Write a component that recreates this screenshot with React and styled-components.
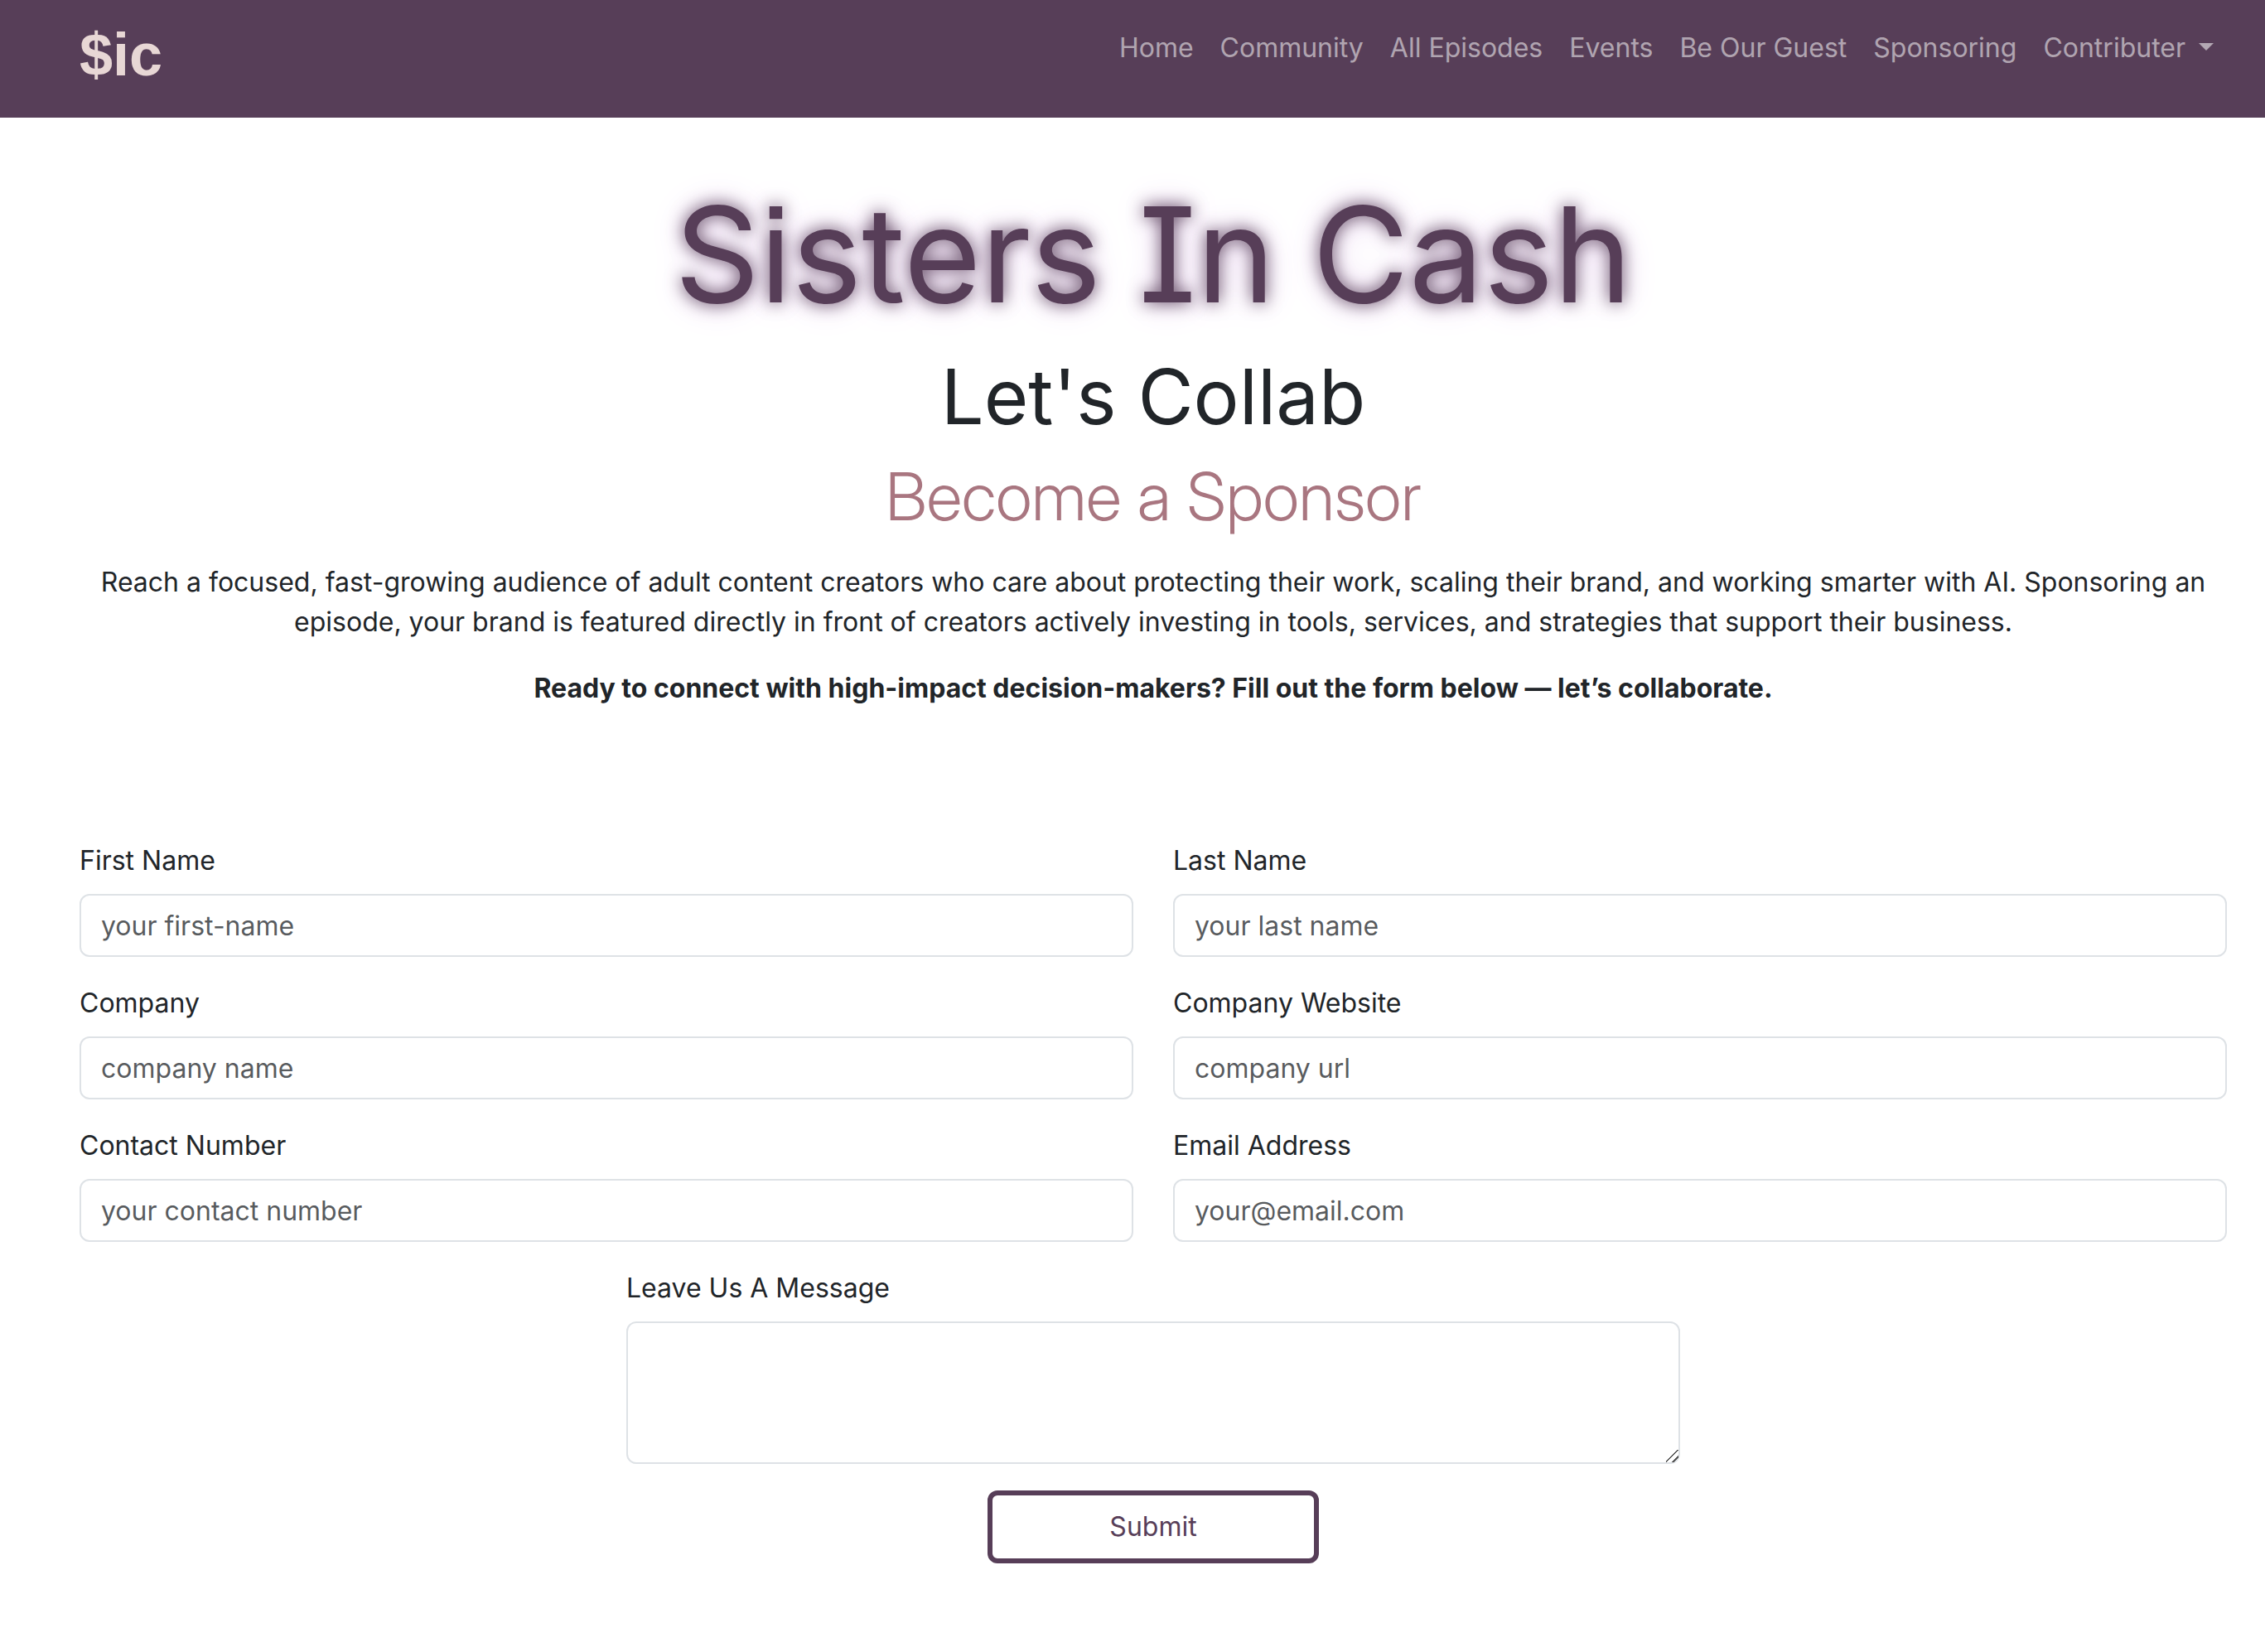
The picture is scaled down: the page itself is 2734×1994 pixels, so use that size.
import React from "react";
import styled, { createGlobalStyle } from "styled-components";

const plum = "#573e58";

const GlobalStyle = createGlobalStyle`
  *, *::before, *::after { box-sizing: border-box; }
  body {
    margin: 0;
    background: #fff;
    color: #212529;
    font-family: Inter, "Liberation Sans", sans-serif;
    font-size: 32px;
    line-height: 48px;
  }
`;

const Navbar = styled.nav`
  display: flex;
  justify-content: space-between;
  align-items: flex-start;
  min-height: 142px;
  padding: 18px 46px 16px 96px;
  background: ${plum};
`;

const Brand = styled.a`
  color: #e8d7d5;
  font-family: "Liberation Sans", Arial, sans-serif;
  font-size: 72px;
  font-weight: 700;
  line-height: 96px;
  text-decoration: none;
`;

const NavList = styled.ul`
  display: flex;
  margin: 0;
  padding: 0;
  list-style: none;
`;

const NavLink = styled.a`
  display: block;
  padding: 16px;
  color: rgba(255, 255, 255, 0.55);
  text-decoration: none;
  white-space: nowrap;
`;

const Caret = styled.span`
  display: inline-block;
  margin-left: 16px;
  vertical-align: 8px;
  border-top: 9px solid;
  border-right: 9px solid transparent;
  border-left: 9px solid transparent;
`;

const Main = styled.main`
  padding: 73px 46px 96px 96px;
`;

const Intro = styled.header`
  padding-bottom: 128px;
  text-align: center;
`;

const Title = styled.h1`
  margin: 0 0 24px;
  color: ${plum};
  font-size: 160px;
  font-weight: 400;
  line-height: 184px;
  font-feature-settings: "cv08", "ss07";
  text-shadow: 0 0 20px ${plum}, 0 0 40px #e4c8ee;
`;

const Subtitle = styled.h2`
  margin: 0 0 16px;
  font-size: 92px;
  font-weight: 400;
  line-height: 112px;
`;

const Tagline = styled.h3`
  margin: 0 0 32px;
  color: #a97680;
  font-family: "Inter Display", Inter, sans-serif;
  font-size: 80px;
  font-weight: 300;
  line-height: 96px;
`;

const Paragraph = styled.p`
  margin: 0 0 32px;
  font-weight: ${(p) => (p.$strong ? 700 : 400)};
`;

const Form = styled.form`
  display: grid;
  grid-template-columns: repeat(4, minmax(0, 1fr));
  gap: 32px 48px;
`;

const Field = styled.div`
  display: flex;
  flex-direction: column;
  gap: 16px;
  grid-column: ${(p) => (p.$centered ? "2 / span 2" : "span 2")};
`;

const Input = styled.input`
  width: 100%;
  height: 76px;
  padding: 12px 24px;
  border: 2px solid #dee2e6;
  border-radius: 12px;
  background: #fff;
  color: inherit;
  font: inherit;
  &::placeholder { color: rgba(33, 37, 41, 0.75); opacity: 1; }
`;

const TextArea = styled(Input).attrs({ as: "textarea" })`
  display: block;
  height: 172px;
  resize: vertical;
  &::-webkit-resizer {
    background: linear-gradient(
      135deg,
      transparent 46%,
      #555 46%,
      #555 53%,
      transparent 53%,
      transparent 73%,
      #555 73%,
      #555 80%,
      transparent 80%
    );
  }
`;

const SubmitButton = styled.button`
  grid-column: 1 / -1;
  justify-self: center;
  width: 400px;
  padding: 14px 24px;
  border: 6px solid ${plum};
  border-radius: 12px;
  background: transparent;
  color: ${plum};
  font: inherit;
`;

const links = ["Home", "Community", "All Episodes", "Events", "Be Our Guest", "Sponsoring"];

const fields = [
  { id: "first-name", label: "First Name", placeholder: "your first-name", type: "text" },
  { id: "last-name", label: "Last Name", placeholder: "your last name", type: "text" },
  { id: "company", label: "Company", placeholder: "company name", type: "text" },
  { id: "website", label: "Company Website", placeholder: "company url", type: "url" },
  { id: "phone", label: "Contact Number", placeholder: "your contact number", type: "tel" },
  { id: "email", label: "Email Address", placeholder: "your@email.com", type: "email" },
];

export default function App() {
  return (
    <>
      <GlobalStyle />
      <Navbar>
        <Brand href="#">$ic</Brand>
        <NavList>
          {links.map((name) => (
            <li key={name}>
              <NavLink href="#">{name}</NavLink>
            </li>
          ))}
          <li>
            <NavLink href="#">
              Contributer
              <Caret />
            </NavLink>
          </li>
        </NavList>
      </Navbar>
      <Main>
        <Intro>
          <Title>Sisters In Cash</Title>
          <Subtitle>Let's Collab</Subtitle>
          <Tagline>Become a Sponsor</Tagline>
          <Paragraph>
            Reach a focused, fast-growing audience of adult content creators who care about
            protecting their work, scaling their brand, and working smarter with AI. Sponsoring an
            episode, your brand is featured directly in front of creators actively investing in
            tools, services, and strategies that support their business.
          </Paragraph>
          <Paragraph $strong>
            Ready to connect with high-impact decision-makers? Fill out the form below — let’s
            collaborate.
          </Paragraph>
        </Intro>
        <Form onSubmit={(e) => e.preventDefault()}>
          {fields.map((f) => (
            <Field key={f.id}>
              <label htmlFor={f.id}>{f.label}</label>
              <Input id={f.id} type={f.type} placeholder={f.placeholder} />
            </Field>
          ))}
          <Field $centered>
            <label htmlFor="message">Leave Us A Message</label>
            <TextArea id="message" />
          </Field>
          <SubmitButton type="submit">Submit</SubmitButton>
        </Form>
      </Main>
    </>
  );
}
